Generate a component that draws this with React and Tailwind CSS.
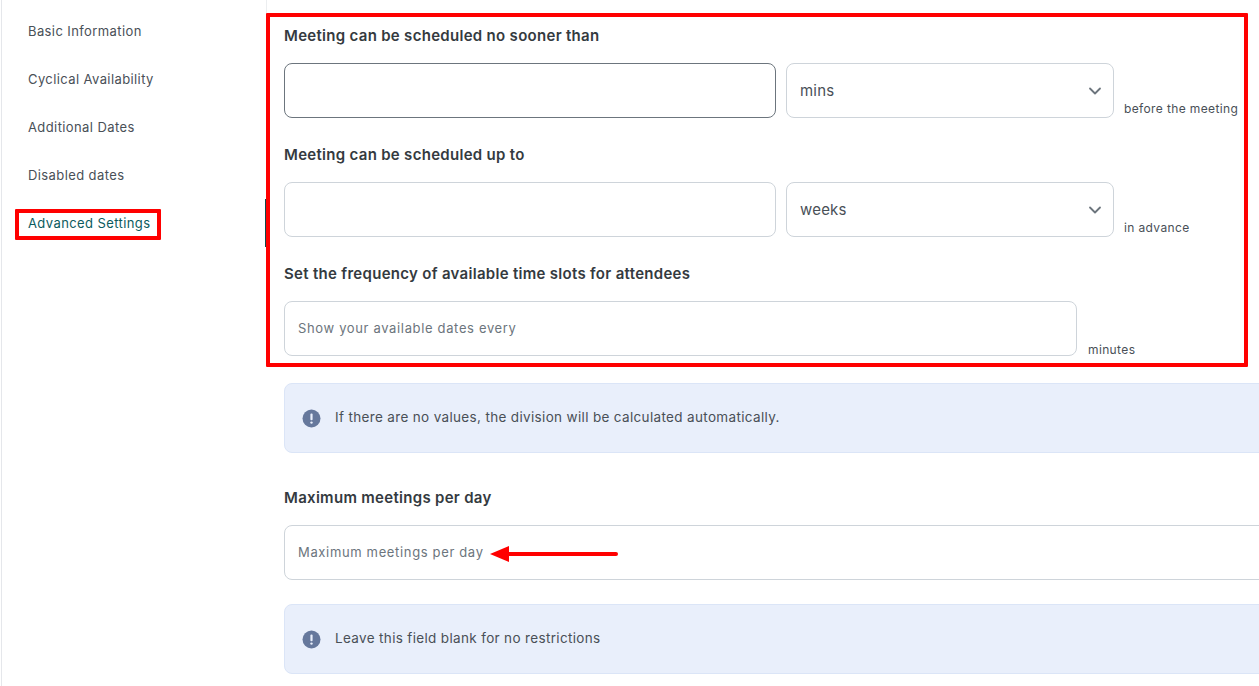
import { ChevronDown } from 'lucide-react'

const menu = ['Basic Information', 'Cyclical Availability', 'Additional Dates', 'Disabled dates', 'Advanced Settings']

function Label({ children, className = '' }) {
  return <div className={`text-[15px] leading-[20px] font-semibold tracking-[0.3px] text-[#343a40] ${className}`}>{children}</div>
}

function Field({ width, placeholder, focused }) {
  return (
    <div className={`${width} h-[55px] shrink-0 rounded-[8px] border bg-white px-[13px] flex items-center text-[13px] tracking-[0.65px] text-[#6c757d] ${focused ? 'border-[#6c757d]' : 'border-[#ced4da]'}`}>
      {placeholder}
    </div>
  )
}

function Unit({ value }) {
  return (
    <div className="w-[328px] h-[55px] shrink-0 rounded-[8px] border border-[#ced4da] bg-white pl-[13px] pr-[8px] flex items-center justify-between text-[15px] tracking-[0.2px] text-[#495057]">
      <span className="pt-[2px]">{value}</span>
      <ChevronDown size={20} strokeWidth={2.2} className="text-[#6c757d]" />
    </div>
  )
}

function Suffix({ children, className = 'mb-[1px] ml-[10px]' }) {
  return <div className={`self-end text-[12px] leading-[16px] tracking-[0.37px] text-[#495057] whitespace-nowrap ${className}`}>{children}</div>
}

function Notice({ children }) {
  return (
    <div className="w-[1100px] h-[70px] rounded-[8px] border border-[#dbe5f7] bg-[#e9effb] pl-[17px] flex items-center gap-[14px] text-[13.5px] tracking-[0.34px] text-[#495057]">
      <svg width="19" height="19" viewBox="0 0 19 19" className="shrink-0">
        <circle cx="9.5" cy="9.5" r="9" fill="#66789c" />
        <rect x="8.4" y="4.4" width="2.2" height="6.8" rx="1" fill="#e9effb" />
        <circle cx="9.5" cy="13.6" r="1.2" fill="#e9effb" />
      </svg>
      <span className="pb-[2px]">{children}</span>
    </div>
  )
}

export default function App() {
  return (
    <div className="relative flex h-[686px] w-[1259px] overflow-hidden bg-white font-['Inter','Noto_Sans',sans-serif]">
      <aside className="w-[266px] shrink-0 ml-[1px] border-l border-[#e5e7eb] pl-[26px] pt-[8px]">
        {menu.map((item, i) => (
          <div
            key={item}
            className={`h-[48px] flex items-center text-[13px] tracking-[0.4px] ${i === 4 ? 'text-[#0c5b5e]' : 'text-[#495057]'}`}
          >
            {item}
          </div>
        ))}
      </aside>

      <main className="flex-1 min-w-0 pl-[17px] pt-[26px]">
        <Label>Meeting can be scheduled no sooner than</Label>
        <div className="flex items-stretch mt-[17px]">
          <Field width="w-[492px]" focused />
          <div className="ml-[10px]"><Unit value="mins" /></div>
          <Suffix>before the meeting</Suffix>
        </div>

        <Label className="mt-[27px]">Meeting can be scheduled up to</Label>
        <div className="flex items-stretch mt-[17px]">
          <Field width="w-[492px]" />
          <div className="ml-[10px]"><Unit value="weeks" /></div>
          <Suffix>in advance</Suffix>
        </div>

        <Label className="mt-[27px]">Set the frequency of available time slots for attendees</Label>
        <div className="flex items-stretch mt-[17px]">
          <Field width="w-[793px]" placeholder="Show your available dates every" />
          <Suffix className="ml-[11px] -mb-[2px]">minutes</Suffix>
        </div>

        <div className="mt-[27px]">
          <Notice>If there are no values, the division will be calculated automatically.</Notice>
        </div>

        <Label className="mt-[35px]">Maximum meetings per day</Label>
        <div className="mt-[17px]">
          <Field width="w-[1100px]" placeholder="Maximum meetings per day" />
        </div>

        <div className="mt-[24px]">
          <Notice>Leave this field blank for no restrictions</Notice>
        </div>
      </main>

      {/* active tab marker and screenshot annotations */}
      <div className="absolute left-[265px] top-[199px] h-[48px] w-[1px] bg-[#0c4a4d]" />
      <div className="absolute left-[266px] top-[0px] h-[199px] w-[1px] bg-[#eceef0]" />
      <div className="absolute left-[15px] top-[209px] h-[31px] w-[146px] rounded-[1px] border-[4px] border-[#ff0000]" />
      <div className="absolute left-[266px] top-[13px] h-[354px] w-[982px] rounded-[1px] border-[4px] border-[#ff0000]" />
      <svg className="absolute left-[488px] top-[544px]" width="132" height="20" viewBox="0 0 132 20">
        <path d="M2 10 L21 2 L21 18 Z" fill="#ff0000" />
        <path d="M20 10 H128" stroke="#ff0000" strokeWidth="4" strokeLinecap="round" />
      </svg>
    </div>
  )
}
